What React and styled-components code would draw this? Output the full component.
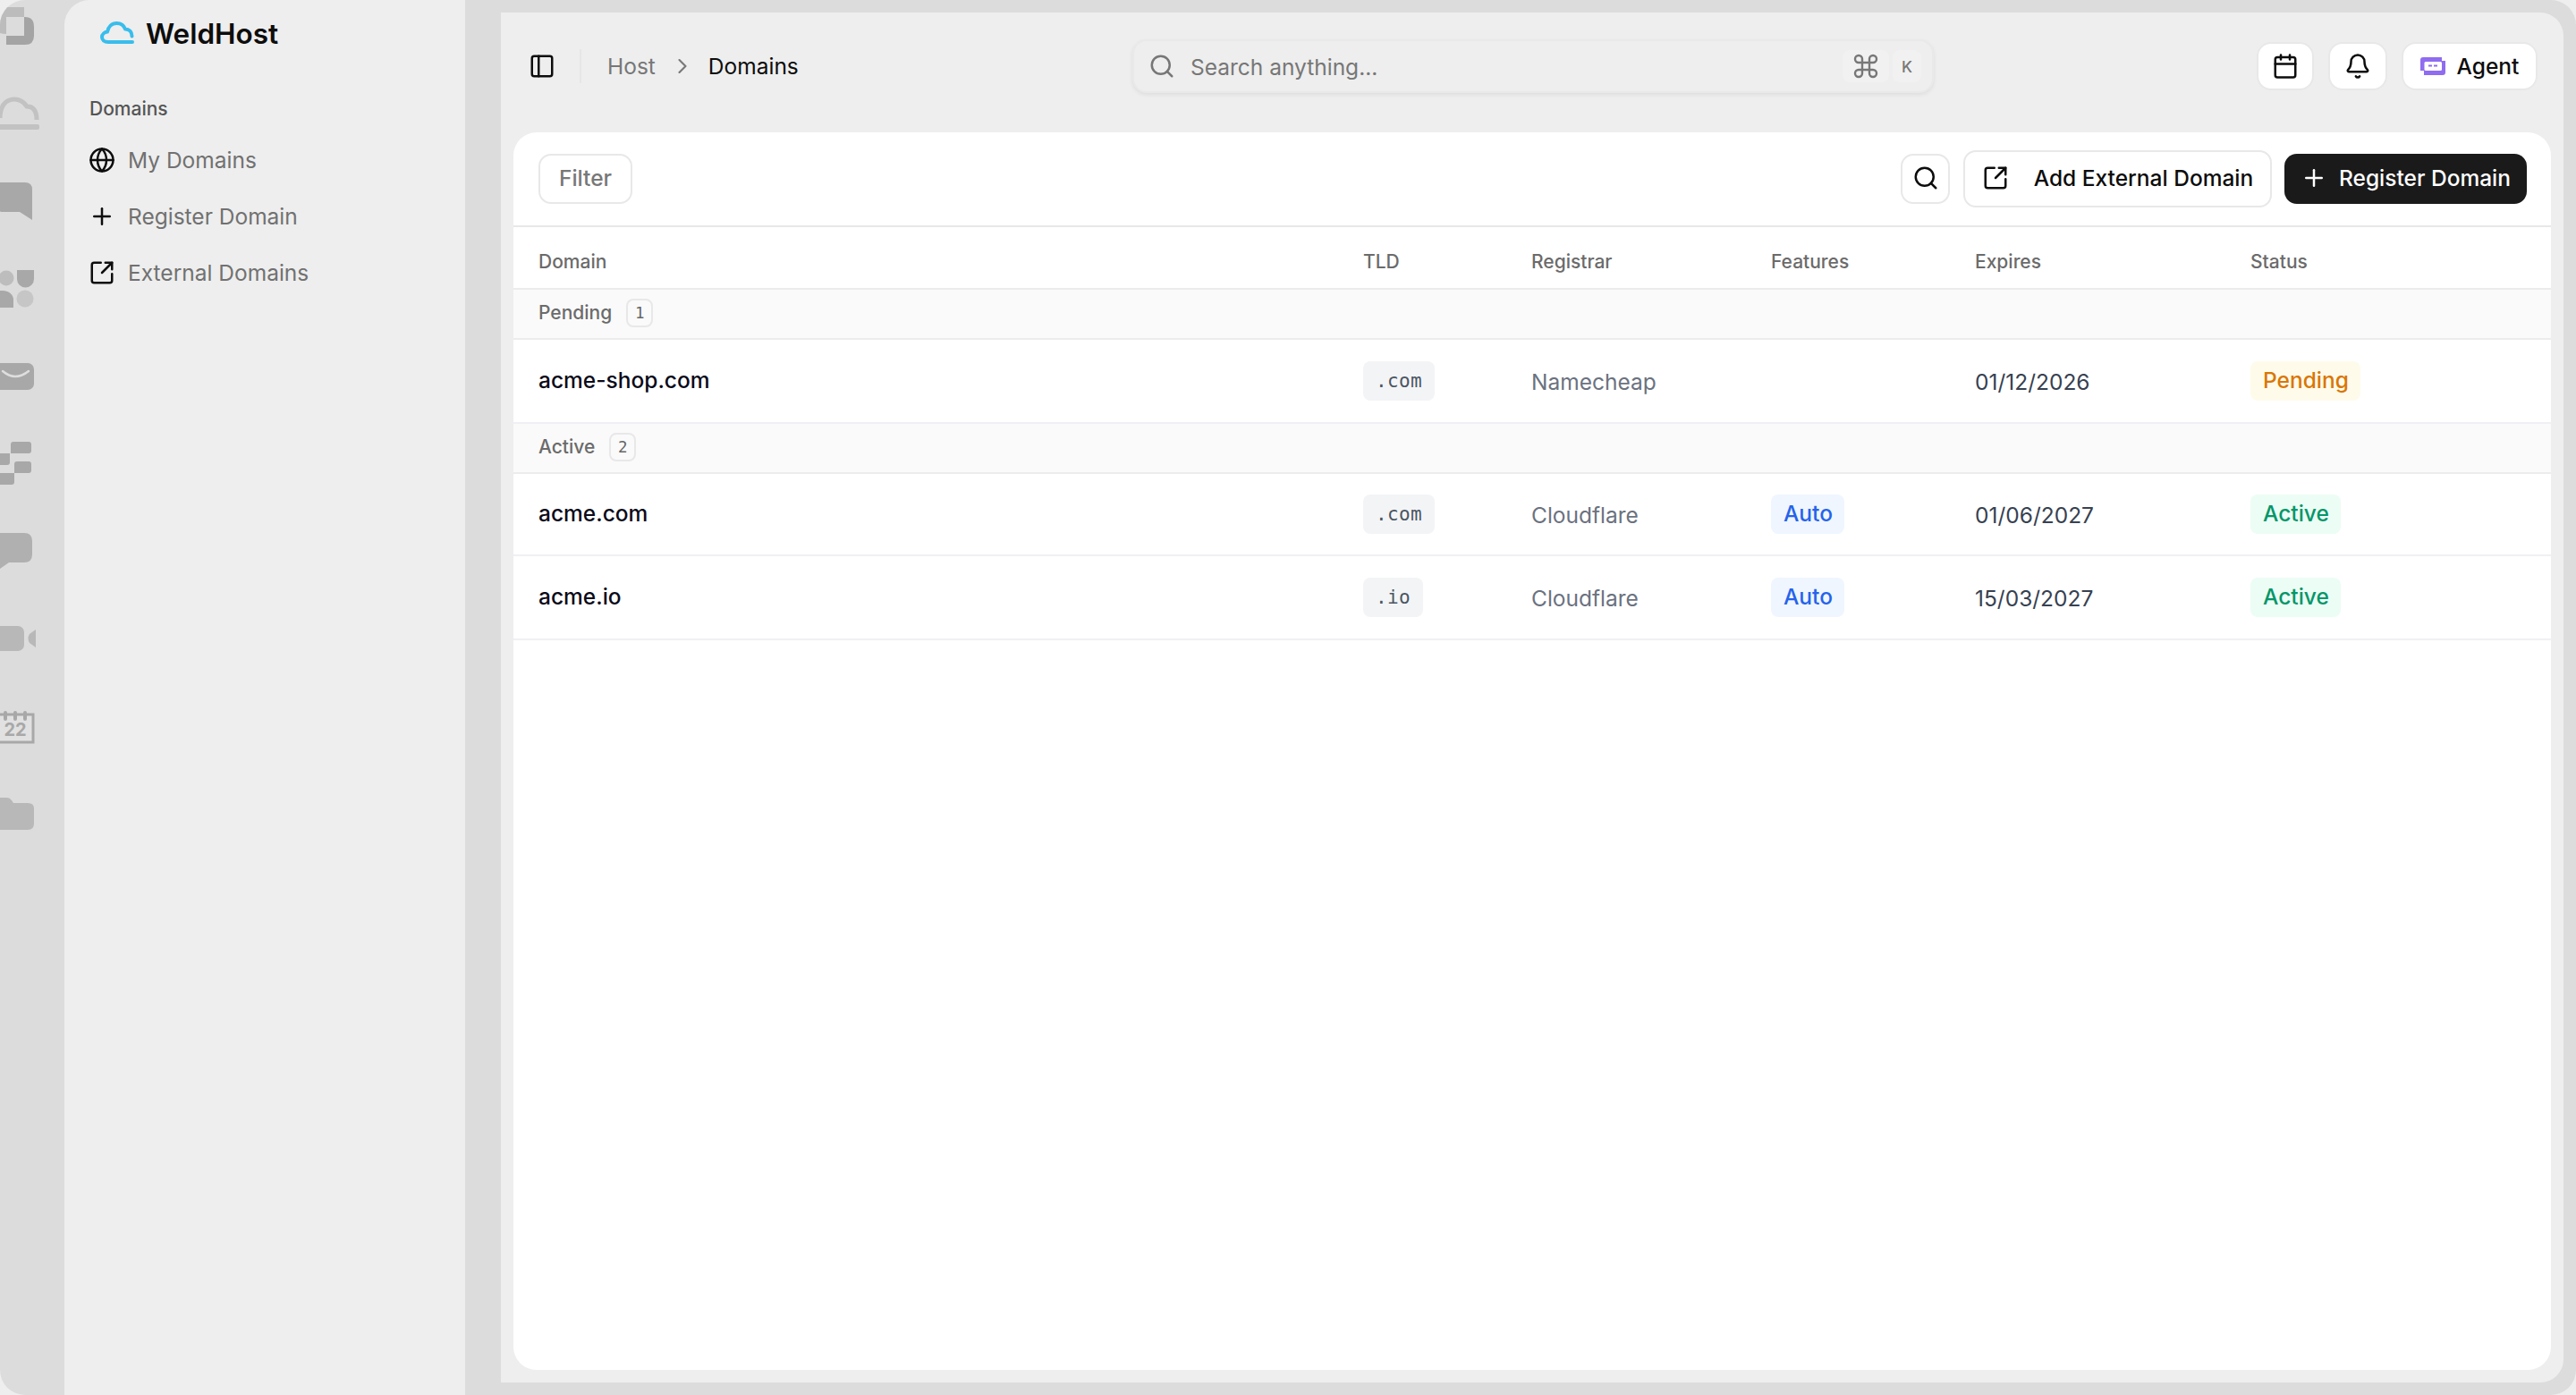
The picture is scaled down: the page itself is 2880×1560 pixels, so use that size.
import React from "react";
import styled, { createGlobalStyle } from "styled-components";
import { Bell, Calendar, ChevronRight, Command, Globe, PanelLeft, Plus, Search, SquareArrowOutUpRight } from "lucide-react";

const Global = createGlobalStyle`
  html, body { margin: 0; padding: 0; background: #eeeeee; }
  body { font-family: Inter, "Noto Sans", sans-serif; }
  * { box-sizing: border-box; }
`;

const Frame = styled.div`
  width: 2880px; height: 1560px; display: flex; overflow: hidden;
  background: #dcdcdc; border-radius: 28px;
`;
const Rail = styled.aside`width: 72px; flex: none; overflow: hidden; svg { display: block; }`;
const Sidebar = styled.nav`
  width: 448px; flex: none; background: #eeeeee; border-top-left-radius: 28px;
  padding: 15px 0 0 28px; display: flex; flex-direction: column;
`;
const Brand = styled.div`
  display: flex; align-items: center; gap: 13px; height: 44px; padding-left: 12px;
  font-size: 31.5px; font-weight: 600; color: #0d0d0d;
`;
const SideTitle = styled.div`font-size: 21px; font-weight: 500; color: #555; margin-top: 48px; line-height: 30px;`;
const SideItem = styled.a`
  display: flex; align-items: center; gap: 14px; height: 63px; font-size: 24.5px; color: #717171;
  svg { flex: none; color: #0d0d0d; }
`;
const SideList = styled.div`display: flex; flex-direction: column; margin: 10px 0 0 -1px;`;

const Main = styled.main`
  flex: 1; margin: 14px 14px 14px 40px; background: #eeeeee; border-radius: 0 26px 26px 0;
  display: flex; flex-direction: column; padding: 0 14px 14px;
`;
const Header = styled.header`
  height: 134px; flex: none; display: grid; grid-template-columns: 1fr 896px 1fr; align-items: center;
  padding: 0 15px 14px 17px;
`;
const Crumbs = styled.div`display: flex; align-items: center; font-size: 24.5px; color: #777;`;
const Divider = styled.span`width: 2px; height: 38px; background: #e6e6e6; margin: 0 29px 0 27px;`;
const Chevron = styled(ChevronRight)`margin: 0 15px 0 16px; color: #777;`;
const Current = styled.span`color: #0d0d0d;`;
const SearchBox = styled.div`
  height: 60px; display: flex; align-items: center; padding: 0 12px 0 16px; background: #eeeeee;
  border: 2px solid #e9e9e9; border-radius: 16px; box-shadow: 0 2px 5px rgba(0,0,0,.07);
  color: #777; font-size: 24.5px;
`;
const SearchText = styled.span`flex: 1; margin: 2px 0 0 17px;`;
const Kbd = styled.kbd`
  height: 36px; min-width: ${p => p.$w}px; display: flex; align-items: center; justify-content: center;
  background: #f1f1f1; border-radius: 8px; font: 500 17.5px Inter, sans-serif; color: #777; margin-left: 4px;
`;
const HeaderActions = styled.div`display: flex; justify-content: flex-end; gap: 16px;`;
const TopButton = styled.button`
  height: 54px; min-width: ${p => p.$w}px; padding: 0; display: flex; align-items: center; justify-content: center; gap: 13px;
  background: #fff; border: 2px solid #e8e8e8; border-radius: 16px; font: 500 24.5px Inter, sans-serif; color: #0d0d0d;
`;

const Card = styled.section`flex: 1; background: #fff; border-radius: 26px; overflow: hidden; display: flex; flex-direction: column;`;
const Toolbar = styled.div`
  height: 106px; flex: none; display: flex; align-items: center; padding: 0 27px 0 28px;
  border-bottom: 2px solid #e8e8e8;
`;
const ToolButton = styled.button`
  height: ${p => p.$h || 56}px; min-width: ${p => p.$w || 0}px; padding: 0 0 2px; margin-left: ${p => p.$ml || 0}px;
  display: flex; align-items: center; justify-content: center; gap: ${p => p.$gap || 0}px;
  background: ${p => p.$dark ? "#1a1a1a" : "#fff"}; border: ${p => p.$dark ? "none" : "2px solid #e8e8e8"};
  border-radius: 14px; font: 500 24.5px Inter, sans-serif;
  color: ${p => p.$dark ? "#fff" : p.$muted ? "#777" : "#0d0d0d"};
`;
const Spacer = styled.div`flex: 1;`;

const COLS = "922px 188px 268px 228px 308px 1fr";
const HeadRow = styled.div`
  display: grid; grid-template-columns: ${COLS}; height: 70px; align-items: center; flex: none;
  border-bottom: 2px solid #ececec; font-size: 21px; font-weight: 500; color: #6b6b6b; padding-top: 8px;
`;
const HeadCell = styled.div`padding-left: 28px;`;
const GroupRow = styled.div`
  height: 56px; flex: none; display: flex; align-items: center; gap: 16px; padding: 0 0 3px 28px;
  background: #fafafa; border-bottom: 2px solid #ececec; font-size: 21px; font-weight: 500; color: #6b6b6b;
`;
const Count = styled.span`
  width: 30px; height: 32px; display: flex; align-items: center; justify-content: center; border: 2px solid #e8e8e8; border-radius: 8px;
  font: 400 17.5px "DejaVu Sans Mono", monospace; color: #666;
`;
const Row = styled.div`
  display: grid; grid-template-columns: ${COLS}; height: ${p => p.$h}px; align-items: center; flex: none;
  border-bottom: 2px solid #f0f0f4; font-size: 24.5px;
`;
const Cell = styled.div`padding-left: 28px; display: flex; align-items: center;`;
const Name = styled(Cell)`font-weight: 500; color: #0b0b1a; padding-bottom: 2px;`;
const Muted = styled(Cell)`color: #6b7280; padding-top: 2px;`;
const DateCell = styled(Cell)`color: #374151; padding-top: 2px;`;
const Tld = styled.code`
  height: 44px; display: flex; align-items: center; padding: 0 14px; background: #f3f4f6; border-radius: 8px;
  font: 400 21px "DejaVu Sans Mono", monospace; letter-spacing: 0.36px; color: #4b5563;
`;
const TONES = {
  pending: ["#fffbeb", "#d97706"],
  active: ["#ecfdf5", "#059669"],
  auto: ["#eff6ff", "#2563eb"],
};
const Chip = styled.span`
  height: 44px; display: flex; align-items: center; padding: 0 13px 2px 14px; border-radius: 8px; font-weight: 500;
  background: ${p => TONES[p.$tone][0]}; color: ${p => TONES[p.$tone][1]};
`;

const RailArt = () => (
  <svg width="72" height="950" viewBox="0 0 72 950" aria-hidden="true">
    <path d="M-4 8H27V19H7V38Q-1 38-4 34Z" fill="#bcbcbc" />
    <path d="M27 19H28Q38 19 38 30V40Q38 50 28 50H7V40H27Z" fill="#a4a4a4" />
    <path d="M0 132C0 119 6 111 16 111C24 111 28 116 30 119C37 119 41 124 41 134" fill="none" stroke="#c2c2c2" strokeWidth="5" />
    <rect x="-4" y="139" width="48" height="6" rx="2" fill="#c2c2c2" />
    <path d="M-4 204H28Q36 204 36 212V246L22 237H4Q-4 237-4 230Z" fill="#a8a8a8" />
    <circle cx="7" cy="311" r="8.5" fill="#bdbdbd" />
    <path d="M19 302H38V312A9.5 9.5 0 0 1 19 312Z" fill="#a8a8a8" />
    <path d="M0 344H15V335C15 329 9 325 3 325H0Z" fill="#a8a8a8" />
    <circle cx="28" cy="334" r="9.5" fill="#c6c6c6" />
    <rect x="-6" y="406" width="44" height="30" rx="7" fill="#a8a8a8" />
    <path d="M3 415Q17 427 32 415" fill="none" stroke="#dedede" strokeWidth="2.5" strokeLinecap="round" />
    <path d="M15 494H32Q35 494 35 497V504Q35 507 32 507H12V497Q12 494 15 494Z" fill="#a8a8a8" />
    <path d="M-2 507H11V517Q11 520 8 520H-2Z" fill="#a8a8a8" />
    <path d="M19 516H32Q35 516 35 519V526Q35 529 32 529H16V519Q16 516 19 516Z" fill="#a8a8a8" />
    <path d="M-2 529H16V539Q16 542 13 542H-2Z" fill="#a8a8a8" />
    <path d="M-4 596H27Q36 596 36 605V620Q36 629 27 629H10L0 636H-4Z" fill="#b0b0b0" />
    <rect x="-8" y="700" width="35" height="28" rx="7" fill="#b8b8b8" />
    <path d="M40 704V724L33 719Q30 714 33 709Z" fill="#b8b8b8" />
    <rect x="-4" y="799" width="41" height="31" fill="#e4e4e4" opacity=".6" />
    <rect x="-4" y="799" width="41" height="31" fill="none" stroke="#a8a8a8" strokeWidth="3" />
    <path d="M6 797V804M17 797V804M28 797V804" stroke="#a8a8a8" strokeWidth="4" strokeLinecap="round" />
    <text x="17" y="823" textAnchor="middle" fontFamily="Inter, sans-serif" fontSize="20" fontWeight="700" fill="#a8a8a8">22</text>
    <path d="M-4 892H8Q11 892 13 895L15 898H31Q38 898 38 904V921Q38 928 31 928H-4Z" fill="#b8b8b8" />
  </svg>
);

const Cloud = () => (
  <svg width="38" height="28" viewBox="0 0 38 28" fill="none" aria-hidden="true">
    <path d="M36 24H9C4.5 24 2 21.5 2 18.5C2 15.2 5 13 8 12.6C9 7 13 3 18.5 3C23 3 26.5 5.5 28 9.5C32.5 9.5 35.5 12.5 35.5 17.5"
      stroke="#38bdec" strokeWidth="4" strokeLinecap="round" strokeLinejoin="round" />
  </svg>
);

const AgentIcon = () => (
  <svg width="28" height="20" viewBox="0 0 28 20" aria-hidden="true">
    <path d="M3 0H24V4H28V17Q28 20 25 20H4V15H0V3Q0 0 3 0Z" fill="#8f6cf0" />
    <rect x="4.5" y="5" width="19.5" height="10" rx="1.5" fill="#fff" />
    <path d="M9 9.5H13M15 9.5H19" stroke="#8f6cf0" strokeWidth="2" />
  </svg>
);

const rows = [
  { group: "Pending", count: 1, items: [
    { name: "acme-shop.com", tld: ".com", reg: "Namecheap", date: "01/12/2026", status: "Pending", h: 94 },
  ]},
  { group: "Active", count: 2, items: [
    { name: "acme.com", tld: ".com", reg: "Cloudflare", auto: true, date: "01/06/2027", status: "Active", h: 92 },
    { name: "acme.io", tld: ".io", reg: "Cloudflare", auto: true, date: "15/03/2027", status: "Active", h: 94 },
  ]},
];

export default function App() {
  return (
    <>
      <Global />
      <Frame>
        <Rail><RailArt /></Rail>
        <Sidebar>
          <Brand><Cloud />WeldHost</Brand>
          <SideTitle>Domains</SideTitle>
          <SideList>
            <SideItem><Globe size={30} strokeWidth={2} />My Domains</SideItem>
            <SideItem><Plus size={30} strokeWidth={2} />Register Domain</SideItem>
            <SideItem><SquareArrowOutUpRight size={30} strokeWidth={2} />External Domains</SideItem>
          </SideList>
        </Sidebar>
        <Main>
          <Header>
            <Crumbs>
              <PanelLeft size={30} color="#0d0d0d" strokeWidth={2} />
              <Divider />
              Host
              <Chevron size={28} strokeWidth={1.8} />
              <Current>Domains</Current>
            </Crumbs>
            <SearchBox>
              <Search size={30} strokeWidth={2} />
              <SearchText>Search anything...</SearchText>
              <Kbd $w={52}><Command size={32} strokeWidth={1.8} /></Kbd>
              <Kbd $w={32}>K</Kbd>
            </SearchBox>
            <HeaderActions>
              <TopButton $w={64}><Calendar size={30} strokeWidth={2} /></TopButton>
              <TopButton $w={66}><Bell size={30} strokeWidth={2} /></TopButton>
              <TopButton $w={152}><AgentIcon />Agent</TopButton>
            </HeaderActions>
          </Header>
          <Card>
            <Toolbar>
              <ToolButton $w={105} $muted>Filter</ToolButton>
              <Spacer />
              <ToolButton $w={55}><Search size={30} strokeWidth={2} /></ToolButton>
              <ToolButton $h={64} $w={345} $gap={28} $ml={15}><SquareArrowOutUpRight size={30} strokeWidth={2} />Add External Domain</ToolButton>
              <ToolButton $dark $w={271} $gap={13} $ml={14}><Plus size={30} strokeWidth={2} />Register Domain</ToolButton>
            </Toolbar>
            <HeadRow>
              {["Domain", "TLD", "Registrar", "Features", "Expires", "Status"].map(h => <HeadCell key={h}>{h}</HeadCell>)}
            </HeadRow>
            {rows.map(g => (
              <React.Fragment key={g.group}>
                <GroupRow>{g.group}<Count>{g.count}</Count></GroupRow>
                {g.items.map(r => (
                  <Row key={r.name} $h={r.h}>
                    <Name>{r.name}</Name>
                    <Cell><Tld>{r.tld}</Tld></Cell>
                    <Muted>{r.reg}</Muted>
                    <Cell>{r.auto && <Chip $tone="auto">Auto</Chip>}</Cell>
                    <DateCell>{r.date}</DateCell>
                    <Cell><Chip $tone={r.status.toLowerCase()}>{r.status}</Chip></Cell>
                  </Row>
                ))}
              </React.Fragment>
            ))}
          </Card>
        </Main>
      </Frame>
    </>
  );
}
